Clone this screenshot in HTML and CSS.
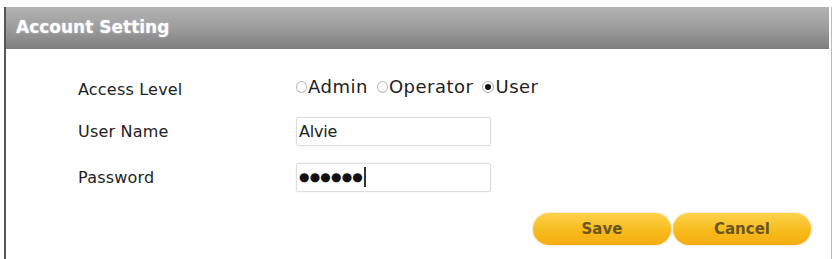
FILE: index.html
```html
<!DOCTYPE html>
<html lang="en">
<head>
    <meta charset="UTF-8">
    <meta name="viewport" content="width=device-width, initial-scale=1.0">
    <title>Account Setting</title>
    <link rel="stylesheet" href="styles.css">
</head>
<body>
    <div class="panel">
        <div class="panel-head">Account Setting</div>
        <div class="panel-body">
            <div class="row">
                <div class="label">Access Level</div>
                <div class="radios">
                    <label class="radio"><span class="dot"></span>Admin</label>
                    <label class="radio"><span class="dot"></span>Operator</label>
                    <label class="radio"><span class="dot on"></span>User</label>
                </div>
            </div>
            <div class="row">
                <div class="label">User Name</div>
                <div class="field">Alvie</div>
            </div>
            <div class="row">
                <div class="label">Password</div>
                <div class="field pass">&#9679;&#9679;&#9679;&#9679;&#9679;&#9679;<span class="caret"></span></div>
            </div>
            <div class="buttons">
                <div class="btn">Save</div>
                <div class="btn">Cancel</div>
            </div>
        </div>
    </div>
</body>
</html>
```

FILE: styles.css
```css
*{
    margin: 0;
    padding: 0;
    box-sizing: border-box;
}

body{
    background: #fff;
    font-family: "DejaVu Sans", sans-serif;
}

.panel{
    margin: 7px 2px 0 4px;
    height: 252px;
    border-left: 2px solid #555;
    border-right: 1px solid #bbb;
}

.panel-head{
    height: 42px;
    margin-right: 2px;
    padding: 10px 0 0 10px;
    background: linear-gradient(#b3b3b3, #9a9a9a 55%, #7e7e7e);
    color: #fff;
    font-weight: bold;
    font-size: 17px;
    text-shadow: 0 0 2px rgba(255,255,255,0.5);
}

.panel-body{
    padding: 21px 0 0 72px;
}

.row{
    display: flex;
    align-items: center;
    height: 46px;
}

.row:first-child{
    height: 38px;
}

.label{
    width: 218px;
    font-size: 16px;
    letter-spacing: 0.2px;
    color: #222;
}

.radios{
    display: flex;
    margin-top: -5px;
    font-size: 18px;
    letter-spacing: 0.5px;
    color: #222;
}

.radio{
    display: flex;
    align-items: center;
    margin-right: 9px;
}

.dot{
    flex-shrink: 0;
    width: 11px;
    height: 12px;
    border: 1.5px solid #b8b8b8;
    border-radius: 50%;
    margin: 1px 1px 0 0;
    position: relative;
}

.dot.on{
    width: 12px;
    border-color: #aaa;
}

.dot.on::after{
    content: "";
    position: absolute;
    left: 1.5px;
    top: 1.5px;
    width: 6px;
    height: 6px;
    border-radius: 50%;
    background: #111;
}

.field{
    width: 195px;
    height: 29px;
    border: 1px solid #ddd;
    border-radius: 2px;
    box-shadow: 0 0 2px rgba(0,0,0,0.08);
    padding: 0 2px;
    font-size: 16px;
    letter-spacing: -0.2px;
    line-height: 27px;
    color: #222;
}

.pass{
    display: flex;
    align-items: center;
    font-size: 12px;
    letter-spacing: 0.2px;
    color: #111;
}

.caret{
    width: 2px;
    height: 20px;
    margin-left: 1px;
    background: #333;
}

.buttons{
    display: flex;
    justify-content: flex-end;
    gap: 2px;
    margin: 13px 20px 0 0;
}

.btn{
    width: 138px;
    height: 32px;
    border-radius: 16px;
    background: linear-gradient(#fcd24a, #f7b91a 60%, #f5ad12);
    box-shadow: 0 0 2px rgba(200,140,0,0.6);
    color: #6a5520;
    font-weight: bold;
    font-size: 15px;
    text-align: center;
    line-height: 32px;
}
```
